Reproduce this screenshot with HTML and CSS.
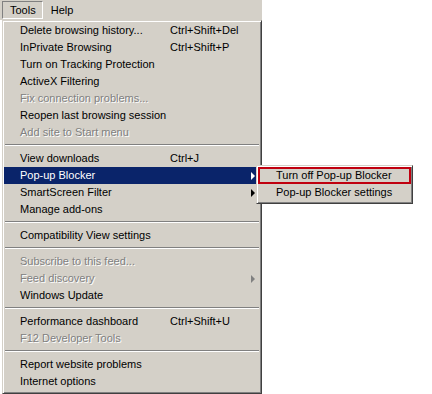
FILE: index.html
```html
<!DOCTYPE html>
<html>
<head>
    <title>Tools menu</title>
    <link rel="stylesheet" href="styles.css">
</head>
<body>
    <div class="menubar">
        <div class="bar-item open">Tools</div>
        <div class="bar-item">Help</div>
    </div>

    <div class="menu main-menu">
        <div class="item"><span>Delete browsing history...</span><span class="key">Ctrl+Shift+Del</span></div>
        <div class="item"><span>InPrivate Browsing</span><span class="key">Ctrl+Shift+P</span></div>
        <div class="item"><span>Turn on Tracking Protection</span></div>
        <div class="item"><span>ActiveX Filtering</span></div>
        <div class="item disabled"><span>Fix connection problems...</span></div>
        <div class="item"><span>Reopen last browsing session</span></div>
        <div class="item disabled"><span>Add site to Start menu</span></div>
        <div class="sep"></div>
        <div class="item"><span>View downloads</span><span class="key">Ctrl+J</span></div>
        <div class="item active sub"><span>Pop-up Blocker</span></div>
        <div class="item sub"><span>SmartScreen Filter</span></div>
        <div class="item"><span>Manage add-ons</span></div>
        <div class="sep"></div>
        <div class="item"><span>Compatibility View settings</span></div>
        <div class="sep"></div>
        <div class="item disabled"><span>Subscribe to this feed...</span></div>
        <div class="item disabled sub"><span>Feed discovery</span></div>
        <div class="item"><span>Windows Update</span></div>
        <div class="sep"></div>
        <div class="item"><span>Performance dashboard</span><span class="key">Ctrl+Shift+U</span></div>
        <div class="item disabled"><span>F12 Developer Tools</span></div>
        <div class="sep"></div>
        <div class="item"><span>Report website problems</span></div>
        <div class="item"><span>Internet options</span></div>
    </div>

    <div class="menu sub-menu">
        <div class="item marked"><span>Turn off Pop-up Blocker</span></div>
        <div class="item"><span>Pop-up Blocker settings</span></div>
    </div>
</body>
</html>
```

FILE: styles.css
```css
body {
    font-family: 'Liberation Sans', Arial, sans-serif;
    font-size: 11px;
    margin: 0;
    padding: 0;
    background-color: #fff;
    color: #000;
    width: 432px;
    height: 394px;
    overflow: hidden;
    position: relative;
}
.menubar {
    width: 262px;
    height: 20px;
    background-color: #d4d0c8;
    display: flex;
    align-items: flex-start;
    padding-left: 2px;
    box-sizing: border-box;
}
.bar-item {
    height: 18px;
    line-height: 17px;
    margin-top: 1px;
    padding: 0 6px 0 7px;
    border: 1px solid transparent;
    box-sizing: border-box;
}
.bar-item.open {
    border-color: #808080 #fff #fff #808080;
}
.menu {
    position: absolute;
    background-color: #d4d0c8;
    border: 1px solid;
    border-color: #d4d0c8 #404040 #404040 #d4d0c8;
    box-shadow: inset 1px 1px 0 #fff, inset -1px -1px 0 #808080;
    padding: 1px;
    box-sizing: border-box;
}
.main-menu {
    left: 2px;
    top: 20px;
    width: 260px;
    height: 374px;
}
.sub-menu {
    left: 256px;
    top: 165px;
    width: 157px;
    height: 39px;
}
.item {
    position: relative;
    height: 17px;
    line-height: 17px;
    padding-left: 16px;
    display: grid;
    grid-template-columns: 150px 1fr;
    white-space: nowrap;
}
.sub-menu .item {
    display: block;
    padding-left: 18px;
}
.item.active {
    background-color: #0a246a;
    color: #fff;
}
.item.disabled {
    color: #808080;
    text-shadow: 1px 1px 0 #fff;
}
.item.sub::after {
    content: '';
    position: absolute;
    right: 5px;
    top: 5px;
    border-left: 4px solid #000;
    border-top: 4px solid transparent;
    border-bottom: 4px solid transparent;
}
.item.active.sub::after {
    border-left-color: #fff;
}
.item.disabled.sub::after {
    border-left-color: #808080;
}
.item.marked {
    box-shadow: inset 0 0 0 2px #c0000f;
}
.sep {
    height: 9px;
    position: relative;
}
.sep::after {
    content: '';
    position: absolute;
    left: 1px;
    right: 1px;
    top: 3px;
    border-top: 1px solid #808080;
    border-bottom: 1px solid #fff;
}
```
